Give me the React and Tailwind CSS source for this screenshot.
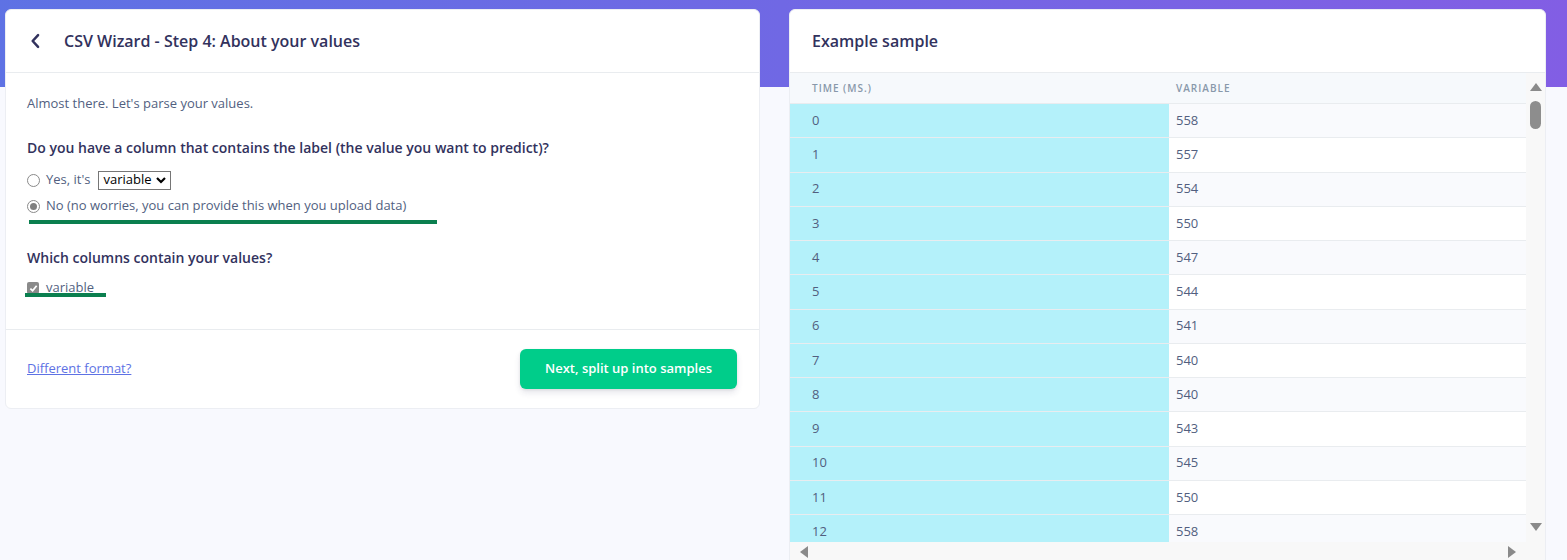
import React from "react";

const rows = [
  [0, 558], [1, 557], [2, 554], [3, 550], [4, 547], [5, 544], [6, 541],
  [7, 540], [8, 540], [9, 543], [10, 545], [11, 550], [12, 558],
];

function Radio({ checked }) {
  return (
    <span className="flex h-[13px] w-[13px] shrink-0 items-center justify-center rounded-full border border-[#8a8a8a] bg-white">
      {checked && <span className="h-[7px] w-[7px] rounded-full bg-[#808080]" />}
    </span>
  );
}

function Tri({ dir }) {
  const pts = {
    up: "0,8 6,0 12,8",
    down: "0,0 12,0 6,8",
    left: "8,0 8,12 0,6",
    right: "0,0 0,12 8,6",
  }[dir];
  const horiz = dir === "left" || dir === "right";
  return (
    <svg width={horiz ? 8 : 12} height={horiz ? 12 : 8} viewBox={horiz ? "0 0 8 12" : "0 0 12 8"}>
      <polygon points={pts} fill="#8a8a8a" />
    </svg>
  );
}

export default function App() {
  return (
    <div className="h-[560px] overflow-hidden bg-[#f8f9fe] bg-[linear-gradient(87deg,#5e72e4_0,#825ee4_100%)] bg-no-repeat bg-[length:100%_87px] font-['Open_Sans',sans-serif]">
      <div className="flex items-start gap-[29px] pl-[5px] pt-[9px]">
        {/* Left card */}
        <div className="w-[755px] rounded-[6px] border border-[#eceef3] bg-white">
          <div className="flex h-[63px] items-center border-b border-[#e9ecef] pl-[20px]">
            <svg width="20" height="20" viewBox="0 0 24 24" fill="none" stroke="#32325d" strokeWidth="3" strokeLinecap="round" strokeLinejoin="round" className="mr-[18px]">
              <path d="M14.5 5 8 12l6.5 7" />
            </svg>
            <span className="text-[16px] font-semibold text-[#32325d]">CSV Wizard - Step 4: About your values</span>
          </div>
          <div className="px-[21px] pb-[33px] pt-[20px]">
            <p className="text-[13px] leading-[20px] text-[#525f7f]">Almost there. Let's parse your values.</p>
            <p className="mt-[24px] text-[14px] font-semibold leading-[22px] text-[#32325d]">
              Do you have a column that contains the label (the value you want to predict)?
            </p>
            <div className="mt-[10px] flex h-[22px] items-center">
              <Radio />
              <span className="ml-[6px] text-[13px] text-[#525f7f]">Yes, it's</span>
              <span className="ml-[8px] flex h-[19px] items-center gap-[4px] border border-[#767676] pl-[4px] pr-[4px] text-[13px] text-black">
                variable
                <svg width="10" height="8" viewBox="0 0 10 8" fill="none" stroke="#000" strokeWidth="2.2">
                  <path d="M1 2l4 4 4-4" />
                </svg>
              </span>
            </div>
            <div className="relative mt-[4px] flex h-[22px] items-center">
              <Radio checked />
              <span className="ml-[6px] text-[13px] text-[#525f7f]">No (no worries, you can provide this when you upload data)</span>
              <span className="absolute left-[2px] top-[25px] h-[4px] w-[408px] bg-[#0b7f4f]" />
            </div>
            <p className="mt-[30px] text-[14px] font-semibold leading-[22px] text-[#32325d]">Which columns contain your values?</p>
            <div className="relative mt-[11px] flex h-[16px] items-center">
              <span className="flex h-[12px] w-[12px] items-center justify-center rounded-[2px] bg-[#8a8a8a]">
                <svg width="9" height="9" viewBox="0 0 10 10" fill="none" stroke="#fff" strokeWidth="2">
                  <path d="M1.5 5.2 4 7.5 8.5 2" />
                </svg>
              </span>
              <span className="ml-[7px] text-[13px] text-[#525f7f]">variable</span>
              <span className="absolute left-[-2px] top-[13px] h-[4px] w-[81px] bg-[#0b7f4f]" />
            </div>
          </div>
          <div className="flex h-[79px] items-center justify-between border-t border-[#e9ecef] pl-[21px] pr-[22px]">
            <a className="text-[13px] text-[#5e72e4] underline">Different format?</a>
            <button className="h-[40px] w-[217px] rounded-[6px] bg-[#00cd8a] text-[13px] font-semibold text-white shadow-[0_4px_6px_rgba(50,50,93,0.11),0_1px_3px_rgba(0,0,0,0.08)]">
              Next, split up into samples
            </button>
          </div>
        </div>

        {/* Right card */}
        <div className="w-[757px] rounded-t-[6px] border border-[#eceef3] bg-white">
          <div className="flex h-[63px] items-center border-b border-[#e9ecef] pl-[22px]">
            <span className="text-[16px] font-semibold text-[#32325d]">Example sample</span>
          </div>
          <div className="flex">
            <div className="flex w-[736px] flex-col">
              <div className="h-[469px] overflow-hidden">
                <div className="flex h-[31px] items-center border-b border-[#e9ecef] bg-[#f6f9fc] text-[10px] font-semibold uppercase tracking-[1px] text-[#8898aa]">
                  <div className="w-[379px] pl-[22px]">Time (ms.)</div>
                  <div className="pl-[7px]">Variable</div>
                </div>
                {rows.map(([t, v], i) => (
                  <div key={t} className="flex h-[34.25px] border-b border-[#e9ecef] text-[13px] text-[#525f7f]">
                    <div className="flex w-[379px] items-center bg-[#b4f1fa] pl-[22px]">{t}</div>
                    <div className={`flex flex-1 items-center pl-[7px] ${i % 2 === 0 ? "bg-[#f9fafd]" : "bg-white"}`}>{v}</div>
                  </div>
                ))}
              </div>
              <div className="flex h-[19px] items-center justify-between bg-[#f8f8f8] px-[10px]">
                <Tri dir="left" />
                <Tri dir="right" />
              </div>
            </div>
            <div className="flex w-[19px] flex-col items-center bg-[#f8f8f8]">
              <div className="mt-[10px]"><Tri dir="up" /></div>
              <div className="mt-[10px] h-[28px] w-[11px] rounded-full bg-[#8d8d8d]" />
              <div className="mt-auto mb-[30px]"><Tri dir="down" /></div>
            </div>
          </div>
        </div>
      </div>
    </div>
  );
}
